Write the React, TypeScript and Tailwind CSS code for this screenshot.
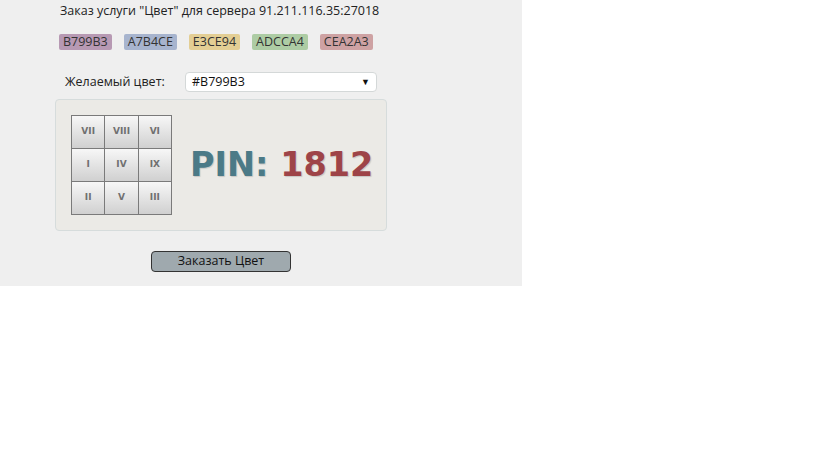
import React from 'react';

const tags = [
  { code: 'B799B3', bg: 'bg-[#b799b3]' },
  { code: 'A7B4CE', bg: 'bg-[#a7b4ce]' },
  { code: 'E3CE94', bg: 'bg-[#e3ce94]' },
  { code: 'ADCCA4', bg: 'bg-[#adcca4]' },
  { code: 'CEA2A3', bg: 'bg-[#cea2a3]' },
];

const keys = ['VII', 'VIII', 'VI', 'I', 'IV', 'IX', 'II', 'V', 'III'];

const App: React.FC = () => {
  return (
    <div className="w-[819px] h-[460px] bg-white font-['Open_Sans',sans-serif]">
      <div className="w-[522px] h-[286px] bg-[#efefef] pt-[2px] text-[#222]">
        <div className="pl-[60px] text-[12.5px] leading-[18px]">
          Заказ услуги "Цвет" для сервера 91.211.116.35:27018
        </div>

        <div className="flex gap-[12px] pl-[59px] mt-[14px]">
          {tags.map((t) => (
            <span
              key={t.code}
              className={`${t.bg} rounded-[2px] px-[4px] h-[16px] text-[12.5px] leading-[16px] text-[#333]`}
            >
              {t.code}
            </span>
          ))}
        </div>

        <div className="flex items-center pl-[65px] mt-[22px]">
          <span className="w-[120px] text-[12.5px] leading-[20px]">Желаемый цвет:</span>
          <div className="w-[192px] h-[20px] bg-white border border-[#d4d8d8] rounded-[4px] flex items-center justify-between pl-[6px] pr-[6px]">
            <span className="text-[12.5px] leading-[18px] text-[#111]">#B799B3</span>
            <span className="text-[9px] text-[#111]">▼</span>
          </div>
        </div>

        <div className="ml-[55px] mt-[7px] w-[332px] h-[132px] bg-[#ebeae6] border border-[#d6dcdc] rounded-[4px] flex items-center pl-[15px]">
          <div className="grid grid-cols-3 gap-px p-px bg-[#7a7a7a] w-[101px] h-[100px]">
            {keys.map((k) => (
              <div
                key={k}
                className="bg-gradient-to-b from-[#f7f7f7] to-[#d0d0d0] flex items-center justify-center text-[9px] font-bold text-[#707070] font-['DejaVu_Sans',sans-serif]"
              >
                {k}
              </div>
            ))}
          </div>
          <div className="ml-[18px] text-[33.5px] font-bold leading-none font-['DejaVu_Sans',sans-serif] [text-shadow:1px_1px_1px_rgba(0,0,0,0.15)]">
            <span className="text-[#4b7a87]">PIN:</span>{' '}
            <span className="text-[#9e4448]">1812</span>
          </div>
        </div>

        <div className="ml-[151px] mt-[20px] w-[140px] h-[21px] bg-[#9fa9ae] border border-[#333] rounded-[4px] flex items-center justify-center text-[12.5px] text-[#111]">
          Заказать Цвет
        </div>
      </div>
    </div>
  );
};

export default App;
